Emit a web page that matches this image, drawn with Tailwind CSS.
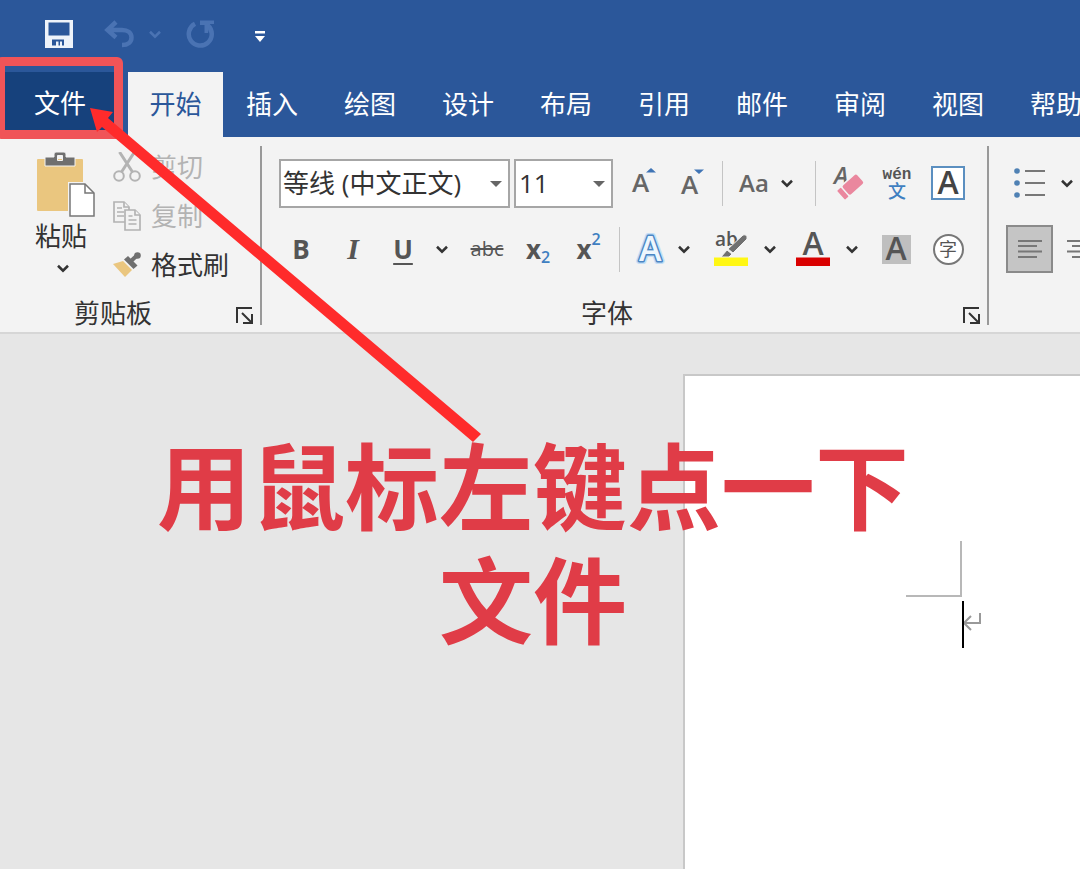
<!DOCTYPE html>
<html lang="zh-CN">
<head>
  <meta charset="UTF-8" />
  <meta name="viewport" content="width=device-width, initial-scale=1.0"/>
  <title>文件</title>
  <script src="https://cdn.jsdelivr.net/npm/@tailwindcss/browser@4"></script>
</head>
<body class="relative min-h-screen flex flex-col overflow-hidden bg-[#e6e6e6] font-['Open_Sans','Noto_Sans_CJK_SC',sans-serif] text-[26px] leading-8 text-[#333]">

  <!-- Shared icons -->
  <svg class="hidden">
    <symbol id="chevron" viewBox="0 0 14 9"><path d="M2 1.8l5 4.8 5-4.8" fill="none" stroke="currentColor" stroke-width="2.6"/></symbol>
    <symbol id="caret" viewBox="0 0 12 6"><path d="M0 0h12L6 6z" fill="currentColor"/></symbol>
    <symbol id="launcher" viewBox="0 0 18 18"><path d="M1 16V1h15M6 6l9 9M16 7v9H7" fill="none" stroke="currentColor" stroke-width="2"/></symbol>
  </svg>

  <header class="bg-[#2b579a] text-white">
    <!-- Quick access toolbar -->
    <div class="flex h-[72px] items-center pl-[45px] pb-1">
      <button aria-label="保存">
        <svg class="w-7 h-7" viewBox="0 0 28 28"><path fill="#eef3fa" fill-rule="evenodd" d="M0 0h28v28H0zM3.500 2.500v13h21v-13zM7 19.500v6h4v-4h2.500v4H15v-4h2v4h2v-6z"/></svg>
      </button>
      <button class="ml-[31px] text-[#4a73b3]" aria-label="撤消">
        <svg class="w-[30px] h-7" viewBox="0 0 30 28"><path d="M3 10h15c6 0 9.500 3 9.500 7.500S24 25 18 25M12 2L3.500 10l8.500 7.500" fill="none" stroke="currentColor" stroke-width="4.500"/></svg>
      </button>
      <button class="ml-3.5 text-[#4a73b3]" aria-label="撤消选项"><svg class="w-3.5 h-[9px]"><use href="#chevron"/></svg></button>
      <button class="ml-6 text-[#4a73b3]" aria-label="重复">
        <svg class="w-[30px] h-7" viewBox="0 0 30 28"><path d="M9 3.800A11.500 11.500 0 1 0 22 5.500" fill="none" stroke="currentColor" stroke-width="4.500"/><path d="M14 .5h14v3.500h-4l-2 9h-3.500V5H14z" fill="currentColor"/></svg>
      </button>
      <button class="ml-[39px] pt-1.5" aria-label="自定义快速访问工具栏">
        <svg class="w-[10px] h-3" viewBox="0 0 10 12"><path d="M0 0h10v2.500H0zM0 5h10L5 11z" fill="#fff"/></svg>
      </button>
    </div>
    <!-- Ribbon tabs -->
    <nav class="flex h-[65px] items-stretch overflow-hidden whitespace-nowrap">
      <button class="ml-[5px] mr-[13px] w-[110px] shrink-0 bg-[#16417c] pb-1">文件</button>
      <button class="w-[95px] shrink-0 bg-[#f3f3f3] pb-0.5 text-[#2b579a]">开始</button>
      <button class="w-[98px] shrink-0 pb-0.5">插入</button>
      <button class="w-[98px] shrink-0 pb-0.5">绘图</button>
      <button class="w-[98px] shrink-0 pb-0.5">设计</button>
      <button class="w-[98px] shrink-0 pb-0.5">布局</button>
      <button class="w-[98px] shrink-0 pb-0.5">引用</button>
      <button class="w-[98px] shrink-0 pb-0.5">邮件</button>
      <button class="w-[98px] shrink-0 pb-0.5">审阅</button>
      <button class="w-[98px] shrink-0 pb-0.5">视图</button>
      <button class="w-[98px] shrink-0 pb-0.5">帮助</button>
    </nav>
  </header>

  <!-- Ribbon -->
  <div class="flex overflow-hidden border-b-2 border-[#d6d6d6] bg-[#f3f3f3] pt-[9px] pb-[7px]">

    <!-- Clipboard group -->
    <section class="flex w-[262px] shrink-0 flex-col border-r-2 border-[#999]">
      <div class="flex">
        <button class="ml-6 flex w-[74px] flex-col items-center pt-1.5">
          <svg class="ml-2.5 w-[58px] h-[66px]" viewBox="0 0 58 66">
            <rect y="7" width="46" height="52" rx="1" fill="#eac67f"/>
            <path fill="#6f6f6f" stroke="#f3f3f3" stroke-width="1" fill-rule="evenodd" d="M8 5h9V2q0-2 2-2h8q2 0 2 2v3h9v9H8zM20.500 3.500v5h5v-5z"/>
            <path d="M31 30h18l11 10v26H31z" fill="#f3f3f3"/>
            <path d="M33 32h15l9 9v23H33z" fill="#fff" stroke="#777" stroke-width="1.500"/>
            <path d="M48 32v9h9" fill="none" stroke="#777" stroke-width="1.500"/>
          </svg>
          <span class="mt-0.5">粘贴</span>
          <svg class="mt-3 ml-1 w-3.5 h-[9px]"><use href="#chevron"/></svg>
        </button>
        <div class="ml-[15px] flex flex-col">
          <button class="-mt-1 flex h-[49px] items-center gap-2.5 text-[#b3b3b3]">
            <svg class="w-7 h-[30px]" viewBox="0 0 28 30"><g fill="none" stroke="currentColor"><path d="M6.500 0l13 20M21.500 0l-13 20" stroke-width="3"/><circle cx="6" cy="24" r="4.800" stroke-width="2"/><circle cx="22" cy="24" r="4.800" stroke-width="2"/></g></svg>
            <span>剪切</span>
          </button>
          <button class="flex h-[49px] items-center gap-2.5 text-[#b3b3b3]">
            <svg class="w-7 h-[30px]" viewBox="0 0 28 30"><g fill="#f3f3f3" stroke="currentColor" stroke-width="1.700"><path d="M1 1h10l5 5v15H1z"/><path d="M11 1v5h5M4 7h5M4 11h7M4 15h7"/><path d="M12 9h10l5 5v15H12z"/><path d="M22 9v5h5M15.500 15h4M15.500 19h8M15.500 23h8"/></g></svg>
            <span>复制</span>
          </button>
          <button class="flex h-[49px] items-center gap-2.5">
            <svg class="w-7 h-[26px]" viewBox="0 0 28 26"><path d="M0 12l10-3 9 9-7 7z" fill="#eac67f"/><path d="M11 7.500l4-3.500 9.500 9.500-4 3.500z" fill="#6f6f6f"/><path d="M18 9l7-6.500" stroke="#6f6f6f" stroke-width="4"/><circle cx="24.500" cy="3.500" r="3.300" fill="#6f6f6f"/></svg>
            <span>格式刷</span>
          </button>
        </div>
      </div>
      <div class="mt-auto flex h-6 items-center pl-[74px]">
        <span>剪贴板</span>
        <button class="ml-auto mr-1.5" aria-label="剪贴板设置"><svg class="mt-1.5 w-[18px] h-[18px]"><use href="#launcher"/></svg></button>
      </div>
    </section>

    <!-- Font group -->
    <section class="flex h-[179px] w-[727px] shrink-0 flex-col border-r-2 border-[#999] pl-[13px] pt-[13px] text-[#555]">
      <div class="flex h-12 items-center">
        <div class="relative ml-1">
          <select aria-label="字体" class="h-[49px] w-[231px] appearance-none border-2 border-[#a6a6a6] bg-white pl-0.5 text-[#333]"><option>等线 (中文正文)</option></select>
          <svg class="pointer-events-none absolute right-2 top-[22px] w-3 h-1.5 text-[#666]"><use href="#caret"/></svg>
        </div>
        <div class="relative ml-1">
          <select aria-label="字号" class="h-[49px] w-[99px] appearance-none border-2 border-[#a6a6a6] bg-white pl-[3px] text-[#333]"><option>11</option></select>
          <svg class="pointer-events-none absolute right-2 top-[22px] w-3 h-1.5 text-[#666]"><use href="#caret"/></svg>
        </div>
        <button class="ml-[7px] flex w-[49px] justify-center" aria-label="增大字号">
          <svg class="w-7 h-[30px] overflow-visible" viewBox="0 0 28 30"><text x="1" y="24" font-size="26" font-weight="600" fill="#666">A</text><path d="M15 4.500h10L20 0z" fill="#3f74b5"/></svg>
        </button>
        <button class="flex w-12 justify-center" aria-label="减小字号">
          <svg class="w-7 h-[30px] overflow-visible" viewBox="0 0 28 30"><text x="2" y="26" font-size="26" font-weight="600" fill="#666">A</text><path d="M15 1.500h10L20 6z" fill="#3f74b5"/></svg>
        </button>
        <div class="ml-[5px] h-[45px] w-px bg-[#c4c4c4]"></div>
        <button class="ml-1.5 w-[50px] text-2xl font-semibold text-[#666]">Aa</button>
        <button class="flex w-4 justify-center text-[#333]" aria-label="大小写选项"><svg class="w-3.5 h-[9px]"><use href="#chevron"/></svg></button>
        <div class="ml-5 h-[45px] w-px bg-[#c4c4c4]"></div>
        <button class="ml-2 flex w-[50px] justify-center" aria-label="清除所有格式">
          <svg class="w-[30px] h-8 overflow-visible" viewBox="0 0 30 32"><text x="0" y="17" font-size="24" font-weight="600" font-style="italic" fill="#666">A</text><g transform="rotate(-42 17 20)"><rect x="2" y="12" width="30" height="14" fill="#f3f3f3"/><rect x="4" y="13.500" width="5" height="12" rx="1" fill="#ea879e"/><rect x="10.500" y="13.500" width="19" height="12" rx="2" fill="#ea879e"/></g></svg>
        </button>
        <button class="flex w-[46px] flex-col items-center" aria-label="拼音指南">
          <span class="font-['Liberation_Mono',monospace] text-base leading-4 font-bold text-[#555]">wén</span>
          <span class="text-lg leading-4 font-medium text-[#3f7fc1]">文</span>
        </button>
        <button class="flex w-14 justify-center" aria-label="字符边框">
          <span class="flex h-[34px] w-[34px] items-center justify-center border-2 border-[#5b8fc0] bg-white pb-0.5 text-[32px] font-semibold text-[#444]">A</span>
        </button>
      </div>

      <div class="mt-[18px] flex h-12 items-center">
        <button class="w-[52px] font-bold" aria-label="加粗">B</button>
        <button class="w-[52px] font-['Liberation_Serif',serif] text-3xl font-bold italic" aria-label="倾斜">I</button>
        <button class="w-12 font-bold underline decoration-2 underline-offset-4" aria-label="下划线">U</button>
        <button class="flex w-[29px] justify-center text-[#333]" aria-label="下划线选项"><svg class="w-3.5 h-[9px]"><use href="#chevron"/></svg></button>
        <button class="w-[62px] text-xl line-through decoration-2" aria-label="删除线">abc</button>
        <button class="w-10 font-bold" aria-label="下标">x<sub class="text-base font-semibold text-[#3f7fc1]">2</sub></button>
        <button class="flex w-[61px] items-center justify-center font-bold" aria-label="上标">x<sup class="pb-1 text-base font-semibold text-[#3f7fc1]">2</sup></button>
        <div class="h-[45px] w-px bg-[#c4c4c4]"></div>
        <button class="flex w-14 justify-center" aria-label="文本效果">
          <svg class="w-[34px] h-9 overflow-visible" viewBox="0 0 34 36"><g font-size="34" font-weight="600" stroke-linejoin="round"><text x="8" y="30" fill="none" stroke="#c3def6" stroke-width="6">A</text><text x="8" y="30" fill="#fff" stroke="#4b86c4" stroke-width="3">A</text><text x="8" y="30" fill="#eef6fd">A</text></g></svg>
        </button>
        <button class="flex w-4 justify-center text-[#333]" aria-label="文本效果选项"><svg class="w-3.5 h-[9px]"><use href="#chevron"/></svg></button>
        <button class="ml-2 flex w-[62px] justify-center" aria-label="突出显示">
          <svg class="w-[34px] h-9 overflow-visible" viewBox="0 0 34 36"><text x="1" y="15" font-size="19" font-weight="600" fill="#555">ab</text><path d="M7 26l6-7 5 4-3 3zM14 18l15-14q2-1 4 1v3L19 22z" fill="#707070" stroke="#f3f3f3"/><path d="M0 26.500h34V35H0z" fill="#fff714"/></svg>
        </button>
        <button class="flex w-4 justify-center text-[#333]" aria-label="突出显示选项"><svg class="w-3.5 h-[9px]"><use href="#chevron"/></svg></button>
        <button class="ml-1 flex w-[62px] justify-center" aria-label="字体颜色">
          <svg class="w-[34px] h-9 overflow-visible" viewBox="0 0 34 36"><text x="17" y="24" text-anchor="middle" font-size="32" font-weight="600" fill="#555">A</text><path d="M0 26.500h34V35H0z" fill="#d90000"/></svg>
        </button>
        <button class="flex w-4 justify-center text-[#333]" aria-label="字体颜色选项"><svg class="w-3.5 h-[9px]"><use href="#chevron"/></svg></button>
        <button class="ml-2 flex w-14 justify-center" aria-label="字符底纹">
          <span class="flex h-[29px] w-[29px] items-center justify-center bg-[#bfbfbf] pb-0.5 text-[32px] font-semibold text-[#555]">A</span>
        </button>
        <button class="flex w-12 justify-center" aria-label="带圈字符">
          <span class="flex h-[31px] w-[31px] items-center justify-center rounded-full border-2 border-[#777] bg-white text-lg">字</span>
        </button>
      </div>

      <div class="mt-auto flex h-6 items-center text-[#333]">
        <span class="ml-auto">字体</span>
        <button class="ml-[330px] mr-1.5" aria-label="字体设置"><svg class="mt-1.5 w-[18px] h-[18px]"><use href="#launcher"/></svg></button>
      </div>
    </section>

    <!-- Paragraph group -->
    <section class="flex shrink-0 flex-col pl-[17px] pt-[13px] text-[#777]">
      <div class="flex h-12 items-center">
        <button class="flex w-12 justify-center" aria-label="项目符号">
          <svg class="w-8 h-[30px]" viewBox="0 0 32 30"><g fill="#4f81b4"><circle cx="3" cy="3" r="2.800"/><circle cx="3" cy="15" r="2.800"/><circle cx="3" cy="27" r="2.800"/></g><path d="M11 3h20M11 15h20M11 27h20" stroke="currentColor" stroke-width="2"/></svg>
        </button>
        <button class="ml-[5px] flex w-4 justify-center text-[#333]" aria-label="项目符号选项"><svg class="w-3.5 h-[9px]"><use href="#chevron"/></svg></button>
      </div>
      <div class="mt-[18px] flex h-12 items-center">
        <button class="flex h-12 w-[47px] items-center justify-center border-2 border-[#8a8a8a] bg-[#c5c5c5]" aria-label="左对齐">
          <svg class="w-6 h-[18px]" viewBox="0 0 24 18"><path d="M0 1h24M0 6h19M0 11.500h24M0 17h19" stroke="currentColor" stroke-width="2"/></svg>
        </button>
        <button class="ml-3.5" aria-label="居中">
          <svg class="w-6 h-[18px]" viewBox="0 0 24 18"><path d="M0 1h24M5 6h14M0 11.500h24M5 17h14" stroke="currentColor" stroke-width="2"/></svg>
        </button>
      </div>
    </section>
  </div>

  <!-- Document -->
  <main class="flex flex-1 pt-10">
    <div class="ml-[683px] flex flex-1 items-start border-l-2 border-t-2 border-[#c8c8c8] bg-white pt-[165px] pl-[221px]">
      <div>
        <div class="h-14 w-14 border-b-2 border-r-2 border-[#b8b8b8]"></div>
        <div class="ml-14 mt-1 flex h-[47px] items-center border-l-2 border-black pb-1.5">
          <svg class="w-[18px] h-5" viewBox="0 0 18 20"><path d="M16 1v10H0M7 4l-7 7 7 7" fill="none" stroke="#999" stroke-width="2"/></svg>
        </div>
      </div>
    </div>
  </main>

  <!-- Annotations -->
  <div class="pointer-events-none absolute left-[-4px] top-[57px] h-[82px] w-[127px] rounded-md border-[9px] border-[#f05458]"></div>
  <svg class="pointer-events-none absolute left-0 top-0 h-[460px] w-[500px]" viewBox="0 0 500 460">
    <path d="M90 108l23 4-5 6 373 316-8 8L102 127l-5 5z" fill="#ff2b2b"/>
  </svg>
  <p class="pointer-events-none absolute left-[133px] top-[425px] w-[800px] text-center font-['KaiTi','Noto_Sans_CJK_SC',sans-serif] text-[94px] leading-[114px] font-bold text-[#e03c47]">用鼠标左键点一下<br>文件</p>
</body>
</html>
